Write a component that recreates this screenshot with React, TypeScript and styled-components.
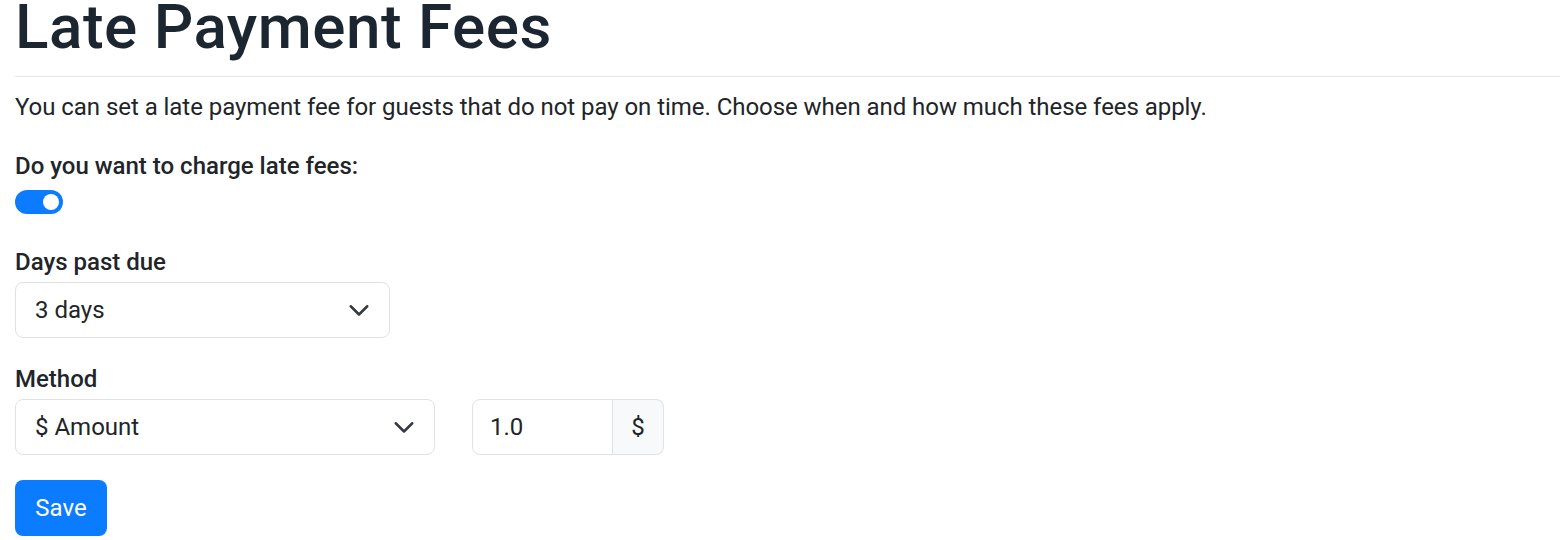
import React from "react";
import styled, { createGlobalStyle } from "styled-components";

const Global = createGlobalStyle`
  html, body { margin: 0; padding: 0; background: #fff; }
  body { font-family: Roboto, "Liberation Sans", Arial, sans-serif; color: #212529; }
  * { box-sizing: border-box; }
`;

const Page = styled.div`
  padding: 0 0 0 15px;
  width: 1560px;
`;

const Title = styled.h1`
  margin: 0;
  font-size: 62px;
  line-height: 54px;
  font-weight: 500;
  color: #1b2631;
  letter-spacing: 0.5px;
`;

const Divider = styled.hr`
  margin: 22px 0 0;
  border: 0;
  border-top: 1px solid #e3e5e8;
`;

const Intro = styled.p`
  margin: 12px 0 0;
  font-size: 24px;
  line-height: 1.5;
  letter-spacing: -0.05px;
`;

const Field = styled.div<{ $top: number }>`
  margin-top: ${(p) => p.$top}px;
  display: flex;
  flex-direction: column;
  align-items: flex-start;
`;

const Label = styled.label`
  font-size: 24px;
  line-height: 33px;
  font-weight: 500;
  color: #212529;
`;

const Switch = styled.span<{ $on: boolean }>`
  margin-top: 7px;
  width: 48px;
  height: 24px;
  border-radius: 12px;
  background: ${(p) => (p.$on ? "#0b7bff" : "#dee2e6")};
  display: flex;
  align-items: center;
  justify-content: ${(p) => (p.$on ? "flex-end" : "flex-start")};
  padding: 0 4px;
`;

const Knob = styled.span`
  width: 16px;
  height: 16px;
  border-radius: 50%;
  background: #fff;
`;

const Row = styled.div`
  margin-top: 3px;
  display: flex;
  gap: 37px;
`;

const SelectBox = styled.div<{ $w: number }>`
  width: ${(p) => p.$w}px;
  height: 56px;
  border: 1px solid #dfe2e6;
  border-radius: 8px;
  display: flex;
  align-items: center;
  justify-content: space-between;
  padding: 0 18px 0 19px;
  font-size: 24px;
  color: #212529;
`;

const InputGroup = styled.div`
  display: flex;
  height: 56px;
`;

const Input = styled.div`
  width: 141px;
  height: 56px;
  border: 1px solid #dfe2e6;
  border-radius: 8px 0 0 8px;
  display: flex;
  align-items: center;
  padding-left: 17px;
  font-size: 24px;
`;

const Addon = styled.div`
  width: 51px;
  height: 56px;
  border: 1px solid #dfe2e6;
  border-left: 0;
  border-radius: 0 8px 8px 0;
  background: #f8f9fa;
  display: flex;
  align-items: center;
  justify-content: center;
  font-size: 24px;
`;

const SaveButton = styled.button`
  margin-top: 25px;
  width: 92px;
  height: 56px;
  border: 0;
  border-radius: 8px;
  background: #0b7bff;
  color: #fff;
  font-family: inherit;
  font-size: 24px;
  padding: 0;
`;

const Chevron = () => (
  <svg width="24" height="24" viewBox="0 0 16 16" fill="none">
    <path d="m2.5 5.5 5.5 5.5 5.5-5.5" stroke="#343a40" strokeWidth="1.7" strokeLinecap="round" strokeLinejoin="round" />
  </svg>
);

export default function App() {
  return (
    <>
      <Global />
      <Page>
        <Title>Late Payment Fees</Title>
        <Divider />
        <Intro>
          You can set a late payment fee for guests that do not pay on time. Choose when and how much these fees apply.
        </Intro>
        <Field $top={25}>
          <Label>Do you want to charge late fees:</Label>
          <Switch $on>
            <Knob />
          </Switch>
        </Field>
        <Field $top={32}>
          <Label>Days past due</Label>
          <Row>
            <SelectBox $w={375}>
              <span>3 days</span>
              <Chevron />
            </SelectBox>
          </Row>
        </Field>
        <Field $top={25}>
          <Label>Method</Label>
          <Row>
            <SelectBox $w={420}>
              <span>$ Amount</span>
              <Chevron />
            </SelectBox>
            <InputGroup>
              <Input>1.0</Input>
              <Addon>$</Addon>
            </InputGroup>
          </Row>
        </Field>
        <SaveButton>Save</SaveButton>
      </Page>
    </>
  );
}
